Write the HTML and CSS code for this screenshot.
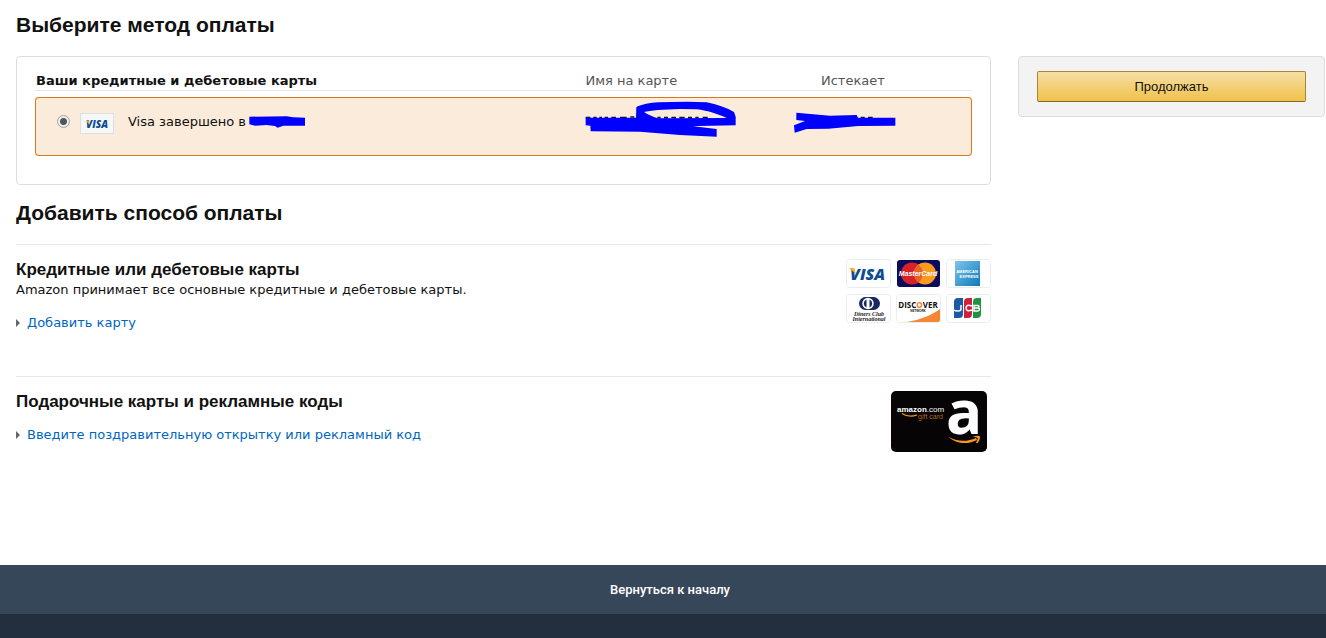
FILE: index.html
```
<!DOCTYPE html>
<html lang="ru">
<head>
    <meta charset="UTF-8">
    <meta name="viewport" content="width=device-width, initial-scale=1.0">
    <title>Выберите метод оплаты</title>
    <link rel="stylesheet" href="styles.css">
</head>
<body>
    <div class="page">
        <h1>Выберите метод оплаты</h1>

        <div class="columns">
            <main>
                <div class="cards-box">
                    <table class="cards-table">
                        <thead>
                            <tr>
                                <th class="col-card">Ваши кредитные и дебетовые карты</th>
                                <th class="col-name">Имя на карте</th>
                                <th class="col-expires">Истекает</th>
                            </tr>
                        </thead>
                        <tbody>
                            <tr>
                                <td>
                                    <div class="card-choice">
                                        <input type="radio" id="visaCard" name="card" checked>
                                        <svg class="visa-small" viewBox="0 0 34 21" aria-hidden="true">
                                            <rect x="0.5" y="0.5" width="33" height="20" fill="#f6f7f9" stroke="#dcdee2"/>
                                            <text x="6" y="15" font-size="10" class="visa-word">VISA</text>
                                            <path d="M5.500 7.500h3l1 4z" fill="#f0b323"/>
                                        </svg>
                                        <label for="visaCard">Visa завершено в</label>
                                        <svg class="mark-number" viewBox="747 348 168 36" aria-hidden="true">
                                            <path d="M748 350L860 349L880 352L915 353V377L850 377L833 383L825 378L800 375L765 377L748 373Z"/>
                                        </svg>
                                    </div>
                                </td>
                                <td>
                                    <svg class="mark-name" viewBox="45 123 456 108" aria-hidden="true">
                                        <path class="ink" d="M47 173h14M70 173h10M88 173h8M104 173h10M124 173h14M150 173h20M181 171h12M262 173h10M282 173h12M304 173h14M328 173h16M354 173h12M376 173h10M398 173h15"/>
                                        <path fill-rule="evenodd" d="M47 173L198 173L199 141C215 134 240 128 265 127L350 125L410 127C445 134 475 146 492 156L497 170V196L384 198L370 199L440 207V230L330 225L210 215L62 214L61 197L47 196ZM222 156C240 151 280 149 330 147L380 148C415 152 445 163 470 174L263 175C248 170 235 164 222 156Z"/>
                                    </svg>
                                </td>
                                <td>
                                    <svg class="mark-expires" viewBox="672 156 306 66" aria-hidden="true">
                                        <path class="ink" d="M872 173h12M894 173h14"/>
                                        <path d="M679 158L780 167L860 165L864 173L976 173V197L865 198L775 206L710 207L674 218L672 196L705 183L679 180Z"/>
                                    </svg>
                                </td>
                            </tr>
                        </tbody>
                    </table>
                </div>

                <h2>Добавить способ оплаты</h2>

                <section>
                    <div class="section-text">
                        <h3>Кредитные или дебетовые карты</h3>
                        <p>Amazon принимает все основные кредитные и дебетовые карты.</p>
                        <a class="expander" href="#add-card">Добавить карту</a>
                    </div>
                    <div class="brands">
                        <svg viewBox="0 0 45 29" role="img" aria-label="Visa">
                            <rect class="plate" x="0.5" y="0.5" width="44" height="28" rx="3"/>
                            <text x="4" y="21" font-size="16" class="visa-word">VISA</text>
                            <path d="M3 9h5l2 6z" fill="#f0b323"/>
                        </svg>
                        <svg viewBox="0 0 45 29" role="img" aria-label="MasterCard">
                            <rect x="1" y="1" width="43" height="27" rx="3" fill="#0b0b5e"/>
                            <circle cx="16" cy="14.500" r="11" fill="#d8222a"/>
                            <circle cx="29" cy="14.500" r="11" fill="#f79a1e"/>
                            <path d="M22.500 5.700a11 11 0 0 1 0 17.600a11 11 0 0 1 0-17.600z" fill="#e8622a"/>
                            <text x="22" y="17" font-size="7" text-anchor="middle" class="mc-word">MasterCard</text>
                        </svg>
                        <svg viewBox="0 0 45 29" role="img" aria-label="American Express">
                            <defs>
                                <linearGradient id="amex" x1="0" y1="0" x2="1" y2="1">
                                    <stop offset="0" stop-color="#7fc6ec"/>
                                    <stop offset="1" stop-color="#0c78b8"/>
                                </linearGradient>
                            </defs>
                            <rect class="plate" x="0.5" y="0.5" width="44" height="28" rx="3"/>
                            <rect x="9" y="2" width="25" height="25" fill="url(#amex)"/>
                            <text x="21" y="14" font-size="4" text-anchor="middle" class="amex-word">AMERICAN</text>
                            <text x="23" y="19" font-size="4" text-anchor="middle" class="amex-word">EXPRESS</text>
                        </svg>
                        <svg viewBox="0 0 45 29" role="img" aria-label="Diners Club International">
                            <rect class="plate" x="0.5" y="0.5" width="44" height="28" rx="3"/>
                            <rect x="13" y="3" width="21" height="13" rx="6.500" fill="#16285f"/>
                            <circle cx="22" cy="9.500" r="5.700" fill="#fff"/>
                            <path d="M20.500 5.500a4.300 4.300 0 0 0 0 8zM23.500 5.500a4.300 4.300 0 0 1 0 8z" fill="#16285f"/>
                            <text x="23" y="22" font-size="6" text-anchor="middle" class="diners-word">Diners Club</text>
                            <text x="23" y="27" font-size="6" text-anchor="middle" class="diners-word">International</text>
                        </svg>
                        <svg viewBox="0 0 45 29" role="img" aria-label="Discover">
                            <rect class="plate" x="0.5" y="0.5" width="44" height="28" rx="3"/>
                            <path d="M11 28C24 26 36 21 44 15V26a2 2 0 0 1-2 2z" fill="#f58634"/>
                            <text x="22" y="14" font-size="8" text-anchor="middle" class="discover-word">DISC<tspan fill="#f07a22">O</tspan>VER</text>
                            <text x="22" y="18" font-size="3" text-anchor="middle" class="discover-sub">NETWORK</text>
                        </svg>
                        <svg viewBox="0 0 45 29" role="img" aria-label="JCB">
                            <rect class="plate" x="0.5" y="0.5" width="44" height="28" rx="3"/>
                            <path d="M12 4h5v16q0 4-4 4H8V8q0-4 4-4z" fill="#1c5aa6"/>
                            <path d="M22 4h4v16q0 4-4 4h-4V8q0-4 4-4z" fill="#cf2040"/>
                            <path d="M31 4h4v16q0 4-4 4h-4V8q0-4 4-4z" fill="#1f9245"/>
                            <path d="M15 11v4q0 2-3 2t-4-1M26 12q-6-2-6 2t6 2M28 11.500h4q2 1 0 2.500q3 1 0 3h-4zM28 14h4" fill="none" stroke="#fff" stroke-width="1.500"/>
                        </svg>
                    </div>
                </section>

                <section>
                    <div class="section-text">
                        <h3>Подарочные карты и рекламные коды</h3>
                        <a class="expander" href="#gift-card">Введите поздравительную открытку или рекламный код</a>
                    </div>
                    <svg class="gift-card" viewBox="0 0 96 61" role="img" aria-label="amazon.com gift card">
                        <rect width="96" height="61" rx="5" fill="#060404"/>
                        <text x="6" y="21" font-size="8" class="gift-name"><tspan font-weight="bold">amazon</tspan>.com</text>
                        <text x="27" y="28" font-size="7" class="gift-sub">gift card</text>
                        <path d="M11 22.500q7 4.500 15 1.500" fill="none" stroke="#f7981d" stroke-width="1.200"/>
                        <text x="55" y="43" font-size="60" class="gift-a">a</text>
                        <path d="M57 45.500C65 53 77 54 86 49l-1-2c-9 4-19 4-28-1.500z" fill="#f7981d"/>
                        <path d="M82 45.500c3-1 6-1 7 0c0 3-1 5-3 7l-1-1c1-2 2-3 1.500-4.500c-1-0.700-2.500-0.700-4.500-1.500z" fill="#f7981d"/>
                    </svg>
                </section>
            </main>

            <aside>
                <button type="button" class="continue-btn">Продолжать</button>
            </aside>
        </div>
    </div>

    <footer>
        <a class="back-to-top" href="#">Вернуться к началу</a>
    </footer>
</body>
</html>
```
FILE: styles.css
```
* {
    box-sizing: border-box;
}

body {
    font-family: Verdana, 'DejaVu Sans', sans-serif;
    font-size: 13px;
    line-height: 20px;
    margin: 0;
    min-height: 100vh;
    display: flex;
    flex-direction: column;
    background-color: #ffffff;
    color: #111111;
}

.page {
    padding: 12px 1px 0 16px;
}

h1, h2, h3, p {
    margin: 0;
}

h1, h2 {
    font-family: 'Liberation Sans', Arial, sans-serif;
    font-size: 21px;
    line-height: 26px;
    margin-bottom: 18px;
}

h2 {
    margin-top: 15px;
}

h3 {
    font-family: 'Liberation Sans', Arial, sans-serif;
    font-size: 17px;
    line-height: 20px;
    padding-top: 2px;
}

.columns {
    display: grid;
    grid-template-columns: minmax(0, 1fr) 307px;
    gap: 27px;
    align-items: start;
}

/* Saved cards */
.cards-box {
    border: 1px solid #dddddd;
    border-radius: 4px;
    padding: 13px 18px 28px;
}

.cards-table {
    width: 100%;
    table-layout: fixed;
    border-collapse: separate;
    border-spacing: 0;
}

.cards-table th {
    padding: 2px 0 0;
    line-height: 18px;
    text-align: left;
    font-weight: normal;
    color: #555555;
    border-bottom: 1px solid #e7e7e7;
}

.cards-table .col-card {
    width: 58%;
    padding-left: 1px;
    font-weight: bold;
    color: #111111;
}

.cards-table .col-name {
    width: 23%;
    padding-left: 7px;
}

.cards-table .col-expires {
    padding-left: 27px;
}

.cards-table tbody::before {
    content: "";
    display: block;
    height: 6px;
}

.cards-table td {
    height: 59px;
    padding: 0;
    vertical-align: top;
    background-color: #fbebdb;
    border: 1px solid #d87a1c;
    border-width: 1px 0;
}

.cards-table td:first-child {
    border-left-width: 1px;
    border-radius: 4px 0 0 4px;
}

.cards-table td:nth-child(2) {
    padding-left: 7px;
}

.cards-table td:last-child {
    border-right-width: 1px;
    border-radius: 0 4px 4px 0;
}

.cards-table svg {
    display: block;
}

.card-choice {
    display: flex;
    align-items: center;
    padding: 14px 0 0 21px;
}

.card-choice input {
    appearance: none;
    width: 13px;
    height: 13px;
    margin: 0 10px 4px 0;
    border: 1px solid #a6a6a6;
    border-radius: 50%;
    background: radial-gradient(circle, #555555 3px, #ececec 4px);
}

.card-choice label {
    margin-bottom: 2px;
}

.visa-small {
    width: 34px;
    height: 21px;
    margin-right: 14px;
}

.mark-number {
    width: 56px;
    height: 12px;
    margin: 0 0 2px 3px;
}

.mark-name {
    width: 152px;
    height: 36px;
    margin-top: 3px;
}

.mark-expires {
    width: 102px;
    height: 22px;
    margin-top: 14px;
}

.mark-number, .mark-name, .mark-expires {
    fill: #0000ff;
}

.ink {
    fill: none;
    stroke: #111133;
    stroke-width: 5;
}

/* Add a payment method */
section {
    display: flex;
    justify-content: space-between;
    align-items: flex-start;
    min-height: 132px;
    padding-top: 13px;
    border-top: 1px solid #e7e7e7;
}

.expander {
    display: flex;
    align-items: center;
    gap: 7px;
    margin-top: 13px;
    color: #0066c0;
    text-decoration: none;
}

.expander::before {
    content: "";
    border-left: 4px solid #666666;
    border-top: 4px solid transparent;
    border-bottom: 4px solid transparent;
}

.expander:hover {
    color: #c45500;
    text-decoration: underline;
}

.brands {
    display: grid;
    grid-template-columns: repeat(3, 45px);
    gap: 6px 5px;
    padding-top: 1px;
}

.brands svg {
    display: block;
    width: 45px;
    height: 29px;
}

.plate {
    fill: #ffffff;
    stroke: #e8eeee;
}

.visa-word {
    font-family: 'Open Sans', sans-serif;
    font-weight: 800;
    font-style: italic;
    fill: #0e4d92;
}

.mc-word {
    font-family: 'Liberation Sans', sans-serif;
    font-weight: bold;
    font-style: italic;
    fill: #ffffff;
}

.amex-word {
    font-family: 'Liberation Sans', sans-serif;
    font-weight: bold;
    fill: #ffffff;
}

.diners-word {
    font-family: 'Liberation Serif', serif;
    font-weight: bold;
    font-style: italic;
    fill: #222222;
}

.discover-word {
    font-family: 'Open Sans', sans-serif;
    font-weight: bold;
    fill: #111111;
}

.discover-sub {
    font-family: 'Liberation Sans', sans-serif;
    font-weight: bold;
    fill: #111111;
}

.gift-card {
    width: 96px;
    height: 61px;
    margin: 1px 4px 0 0;
}

.gift-name {
    font-family: 'Liberation Sans', sans-serif;
    fill: #ffffff;
}

.gift-sub {
    font-family: 'Liberation Sans', sans-serif;
    fill: #b5651d;
}

.gift-a {
    font-family: 'Open Sans', sans-serif;
    font-weight: bold;
    fill: #ffffff;
}

/* Continue */
aside {
    padding: 14px 18px;
    background-color: #f3f3f3;
    border: 1px solid #dddddd;
    border-radius: 4px;
}

.continue-btn {
    display: block;
    width: 100%;
    height: 31px;
    padding: 0;
    font-family: 'Liberation Sans', Arial, sans-serif;
    font-size: 13px;
    color: #111111;
    background: linear-gradient(to bottom, #f7dfa5, #f0c14b);
    border: 1px solid #a88734;
    border-bottom-color: #846a29;
    border-radius: 2px;
    cursor: pointer;
}

.continue-btn:hover {
    background: linear-gradient(to bottom, #f5d78e, #eeb933);
}

/* Footer */
footer {
    flex: 1;
    margin-top: 57px;
    background-color: #232f3e;
}

.back-to-top {
    display: block;
    padding: 15px 0 14px 14px;
    text-align: center;
    font-family: Roboto, Arial, sans-serif;
    font-weight: 500;
    color: #ffffff;
    text-decoration: none;
    background-color: #37475a;
}
```
